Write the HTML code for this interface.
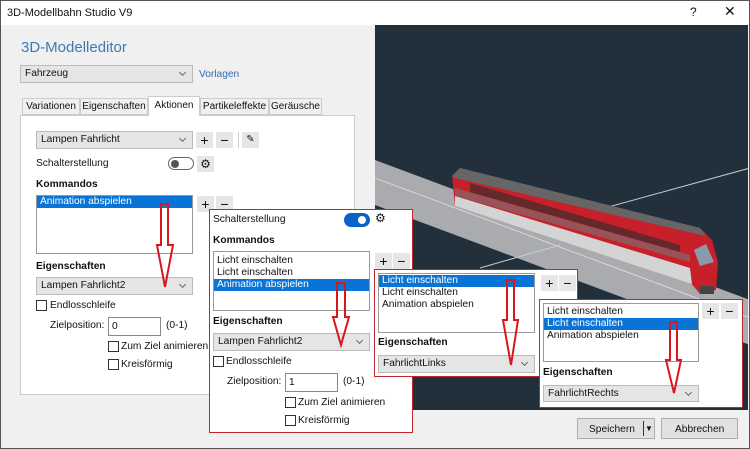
<!DOCTYPE html>
<html><head><meta charset="utf-8"><style>
*{box-sizing:border-box;margin:0;padding:0}
body{width:750px;height:449px;overflow:hidden;background:#f0f0f0;font-family:"Liberation Sans",sans-serif;font-size:10.2px;color:#111;position:relative}
.a{position:absolute}
.t{position:absolute;white-space:nowrap;line-height:12px}
.b{font-weight:bold}
.combo{position:absolute;background:#e5e5e5;border:1px solid #bbb;padding-left:4px;line-height:16px}
.combo:after{content:"";position:absolute;right:7px;top:4px;width:4px;height:4px;border-right:1px solid #666;border-bottom:1px solid #666;transform:rotate(45deg)}
.btn{position:absolute;background:#e6e6e6;width:17px;height:16px;text-align:center;line-height:16px;font-size:14px}
.list{position:absolute;background:#fff;border:1px solid #999}
.sel{background:#0a74d6;color:#fff}
.row{height:12px;line-height:12px;padding-left:3px;white-space:nowrap}
.cb{position:absolute;width:11px;height:11px;border:1px solid #333;background:#fff}
.inp{position:absolute;background:#fff;border:1px solid #888;padding-left:3px;line-height:17px}
.pop{position:absolute;background:#fff;border:1px solid #c0272d}
.tab{position:absolute;top:98px;height:17px;border:1px solid #ccc;background:#f0f0f0;font-size:10px;text-align:center;line-height:15px;white-space:nowrap}
</style></head><body>
<div class="a" style="left:0;top:0;width:750px;height:449px;border:1px solid #555"></div>
<div class="a" style="left:1px;top:1px;width:748px;height:24px;background:#fff"></div>
<div class="t" style="left:7px;top:7px;font-size:11px">3D-Modellbahn Studio V9</div>
<div class="t" style="left:690px;top:6px;font-size:12px">?</div>
<div class="t" style="left:724px;top:5px;font-size:14px">✕</div>
<svg class="a" style="left:375px;top:25px" width="373" height="385" viewBox="375 25 373 385">
<rect x="375" y="25" width="373" height="385" fill="#22303c"/>
<polygon points="375,160 750,300 750,345 375,205" fill="#a9abae"/>
<line x1="375" y1="178" x2="750" y2="318" stroke="#d8d8d8" stroke-width="1"/>
<line x1="590" y1="212" x2="750" y2="168" stroke="#c8ccd0" stroke-width="1"/>
<line x1="480" y1="268" x2="560" y2="245" stroke="#c8ccd0" stroke-width="1"/>
<polygon points="452,176 460,168 700,228 712,240 718,262 716,290 700,294 690,282 455,206" fill="#c8202a"/>
<polygon points="452,176 460,168 700,228 706,236 455,178" fill="#666"/>
<polygon points="455,196 690,268 692,284 455,206" fill="#d4d4d4"/>
<polygon points="470,183 680,245 680,252 470,192" fill="#3a2c2c" opacity="0.7"/>
<polygon points="455,188 690,255 690,262 455,196" fill="#777" opacity="0.6"/>
<polygon points="694,250 706,244 714,262 700,266" fill="#8a9aaa"/>
<rect x="700" y="286" width="14" height="8" fill="#444"/>
</svg>
<div class="t" style="left:21px;top:40px;font-size:15px;line-height:16px;color:#3c7ab4">3D-Modelleditor</div>
<div class="combo" style="left:20px;top:65px;width:173px;height:18px">Fahrzeug</div>
<div class="t" style="left:199px;top:69px;color:#2e6ead">Vorlagen</div>
<div class="a" style="left:20px;top:115px;width:335px;height:280px;background:#fff;border:1px solid #ccc"></div>
<div class="tab" style="left:22px;width:58px">Variationen</div>
<div class="tab" style="left:80px;width:68px">Eigenschaften</div>
<div class="tab" style="left:148px;top:96px;width:52px;height:20px;background:#fff;border-bottom:none;line-height:17px">Aktionen</div>
<div class="tab" style="left:200px;width:69px">Partikeleffekte</div>
<div class="tab" style="left:269px;width:53px">Geräusche</div>
<div class="combo" style="left:36px;top:131px;width:157px;height:18px">Lampen Fahrlicht</div>
<div class="btn" style="left:196px;top:132px">+</div><div class="btn" style="left:216px;top:132px">−</div>
<div class="a" style="left:238px;top:132px;width:1px;height:16px;background:#ccc"></div>
<div class="btn" style="left:242px;top:132px;font-size:10px">✎</div>
<div class="t" style="left:36px;top:158px">Schalterstellung</div>
<div class="a" style="left:168px;top:157px;width:26px;height:13px;border:1px solid #666;border-radius:7px;background:#fff"></div>
<div class="a" style="left:171px;top:160px;width:8px;height:8px;border-radius:50%;background:#555"></div>
<div class="btn" style="left:197px;top:156px;font-size:12px">⚙</div>
<div class="t b" style="left:36px;top:179px">Kommandos</div>
<div class="list" style="left:36px;top:195px;width:157px;height:59px"><div class="row sel">Animation abspielen</div></div>
<div class="btn" style="left:197px;top:196px">+</div><div class="btn" style="left:216px;top:196px">−</div>
<div class="t b" style="left:36px;top:261px">Eigenschaften</div>
<div class="combo" style="left:36px;top:277px;width:157px;height:18px">Lampen Fahrlicht2</div>
<div class="cb" style="left:36px;top:300px"></div><div class="t" style="left:50px;top:300px">Endlosschleife</div>
<div class="t" style="left:50px;top:320px">Zielposition:</div>
<div class="inp" style="left:108px;top:317px;width:53px;height:19px">0</div>
<div class="t" style="left:166px;top:320px">(0-1)</div>
<div class="cb" style="left:108px;top:341px"></div><div class="t" style="left:121px;top:341px">Zum Ziel animieren</div>
<div class="cb" style="left:108px;top:359px"></div><div class="t" style="left:121px;top:359px">Kreisförmig</div>
<div class="pop" style="left:209px;top:209px;width:204px;height:224px"></div>
<div class="t" style="left:213px;top:214px">Schalterstellung</div>
<div class="a" style="left:344px;top:213px;width:26px;height:14px;border-radius:7px;background:#0a62c8"></div>
<div class="a" style="left:358px;top:216px;width:8px;height:8px;border-radius:50%;background:#fff"></div>
<div class="t" style="left:375px;top:212px;font-size:12px">⚙</div>
<div class="t b" style="left:213px;top:235px">Kommandos</div>
<div class="list" style="left:213px;top:251px;width:157px;height:60px;padding-top:3px"><div class="row">Licht einschalten</div><div class="row">Licht einschalten</div><div class="row sel">Animation abspielen</div></div>
<div class="btn" style="left:375px;top:253px">+</div><div class="btn" style="left:393px;top:253px">−</div>
<div class="t b" style="left:213px;top:316px">Eigenschaften</div>
<div class="combo" style="left:213px;top:333px;width:157px;height:18px">Lampen Fahrlicht2</div>
<div class="cb" style="left:213px;top:356px"></div><div class="t" style="left:226px;top:356px">Endlosschleife</div>
<div class="t" style="left:227px;top:376px">Zielposition:</div>
<div class="inp" style="left:285px;top:373px;width:53px;height:19px">1</div>
<div class="t" style="left:343px;top:376px">(0-1)</div>
<div class="cb" style="left:285px;top:397px"></div><div class="t" style="left:298px;top:397px">Zum Ziel animieren</div>
<div class="cb" style="left:285px;top:415px"></div><div class="t" style="left:298px;top:415px">Kreisförmig</div>
<div class="pop" style="left:374px;top:269px;width:204px;height:108px"></div>
<div class="list" style="left:378px;top:273px;width:157px;height:60px;padding-top:1px"><div class="row sel">Licht einschalten</div><div class="row">Licht einschalten</div><div class="row">Animation abspielen</div></div>
<div class="btn" style="left:541px;top:275px">+</div><div class="btn" style="left:559px;top:275px">−</div>
<div class="t b" style="left:378px;top:337px">Eigenschaften</div>
<div class="combo" style="left:378px;top:355px;width:157px;height:18px">FahrlichtLinks</div>
<div class="pop" style="left:539px;top:299px;width:204px;height:109px"></div>
<div class="list" style="left:543px;top:303px;width:156px;height:59px;padding-top:2px"><div class="row">Licht einschalten</div><div class="row sel">Licht einschalten</div><div class="row">Animation abspielen</div></div>
<div class="btn" style="left:702px;top:303px">+</div><div class="btn" style="left:721px;top:303px">−</div>
<div class="t b" style="left:543px;top:367px">Eigenschaften</div>
<div class="combo" style="left:543px;top:385px;width:156px;height:17px">FahrlichtRechts</div>
<svg class="a" style="left:0;top:0" width="750" height="449">
<g fill="none" stroke="#d9161c" stroke-width="2">
<polygon points="161,204 168,204 168,245 173,245 165,287 157,245 161,245"/>
<polygon points="337,283 345,283 345,317 349,317 341,345 333,317 337,317"/>
<polygon points="507,280 514,280 514,320 518,320 511,365 503,320 507,320"/>
<polygon points="670,322 677,322 677,360 681,360 674,393 666,360 670,360"/>
</g></svg>
<div class="a" style="left:577px;top:418px;width:78px;height:21px;background:#e1e1e1;border:1px solid #adadad"></div>
<div class="t" style="left:589px;top:424px">Speichern</div>
<div class="a" style="left:643px;top:421px;width:1px;height:15px;background:#333"></div>
<div class="t" style="left:645px;top:423px;font-size:8px">▼</div>
<div class="a" style="left:661px;top:418px;width:77px;height:21px;background:#e1e1e1;border:1px solid #adadad"></div>
<div class="t" style="left:675px;top:424px">Abbrechen</div>
</body></html>
